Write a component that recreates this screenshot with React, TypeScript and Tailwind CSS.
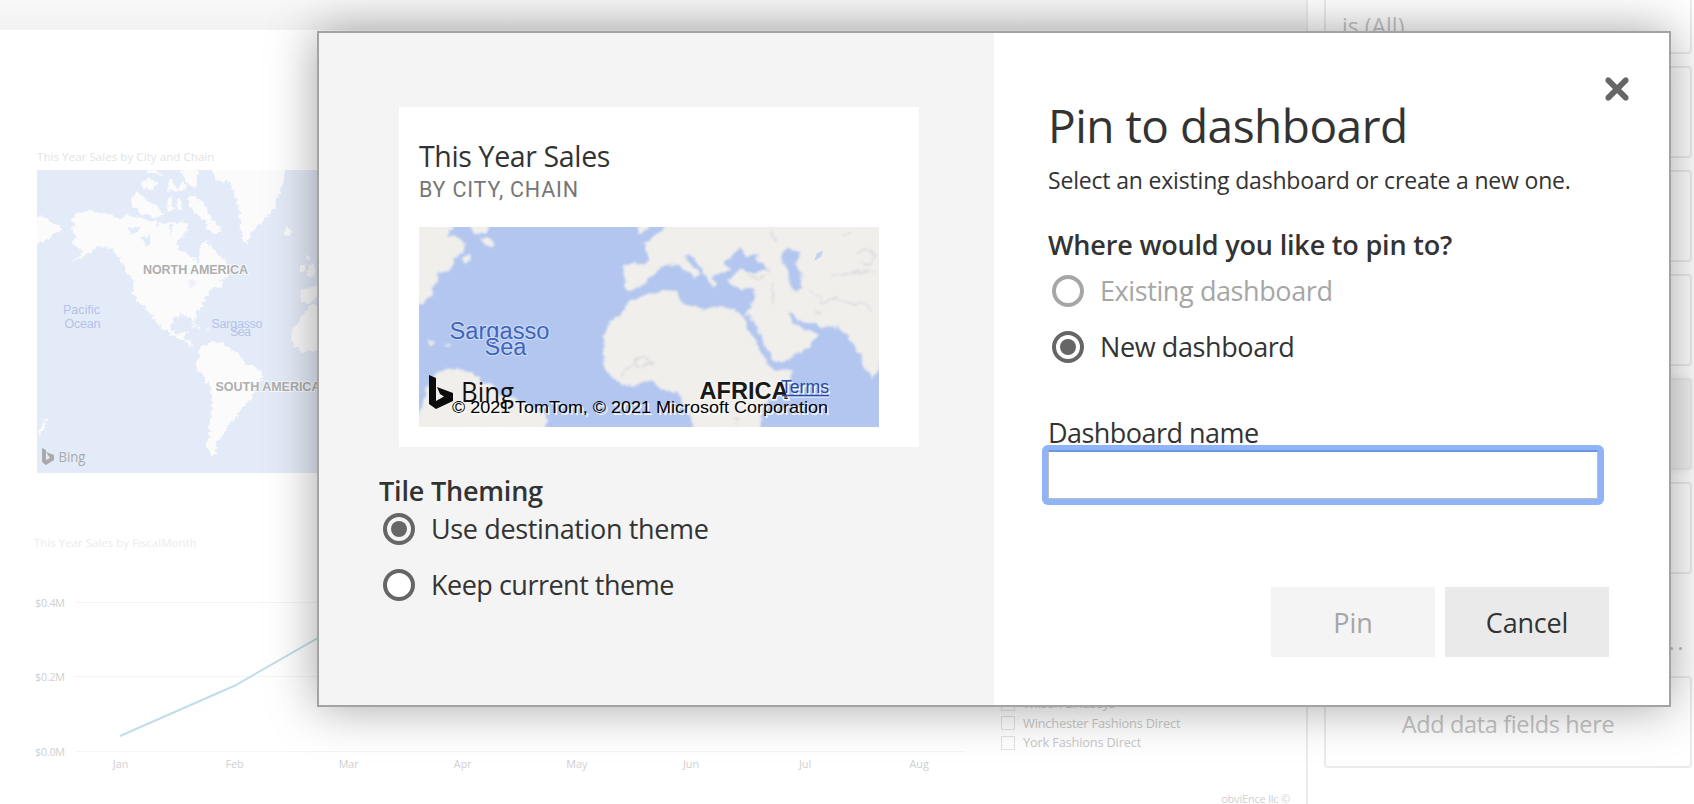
import { useId } from "react";

const T = "font-['Open_Sans','Noto_Sans',sans-serif] whitespace-nowrap";

function Rough({ id, f, s, b }: { id: string; f: number; s: number; b: number }) {
  return (
    <filter id={id} x="-5%" y="-5%" width="110%" height="110%">
      <feTurbulence type="fractalNoise" baseFrequency={f} numOctaves={3} seed={4} result="n" />
      <feDisplacementMap in="SourceGraphic" in2="n" scale={s} xChannelSelector="R" yChannelSelector="G" />
      <feGaussianBlur stdDeviation={b} />
    </filter>
  );
}

function WorldMap() {
  return (
    <svg width="284" height="303" viewBox="37 170 284 303" className="block">
      <defs><Rough id="rw" f={0.2} s={7} b={0.6} /></defs>
      <rect x="37" y="170" width="284" height="304" fill="#e4ebf8" />
      <g fill="#fbfbfb" filter="url(#rw)">
        <path d="M30 214L45 217L52 223L60 226L64 231L54 232L51 238L46 241L30 246Z" />
        <path d="M76 214L84 211L99 212L110 214L119 220L126 215L135 216L142 218L151 221L163 224L168 222L182 222L187 224L188 229L183 236L177 241L178 250L187 254L194 259L199 263L200 253L199 246L204 241L211 246L217 254L225 259L231 270L225 278L217 281L224 282L220 286L212 289L207 296L204 301L203 307L197 311L194 319L195 325L190 317L180 314L174 318L170 325L174 333L181 334L187 330L184 339L191 341L192 347L198 349L190 346L180 339L168 333L160 326L151 315L144 306L136 300L133 292L134 282L129 274L123 265L119 257L114 251L105 247L96 248L91 252L80 258L72 262L83 252L72 243L76 236L71 229L78 226L72 220Z" />
        <path d="M132 197L138 192L144 198L156 205L164 215L157 218L143 214L132 205Z" />
        <path d="M140 182L150 179L158 184L150 190L143 188ZM156 172L163 174L158 176ZM166 190L170 178L177 189L183 181L187 189L176 191ZM179 169L200 171L196 179L197 190L187 183L183 175ZM147 170L161 169L156 173L148 173Z" />
        <path d="M167 200L171 196L174 208L168 213ZM176 200L179 196L183 208L177 212ZM187 195L198 198L207 208L211 219L220 228L218 235L207 229L206 221L196 214L189 206Z" />
        <path d="M211 166L216 181L230 182L235 196L239 210L240 225L242 240L247 243L253 232L260 223L270 214L276 206L277 198L283 186L285 165L212 165Z" />
        <path d="M283 231L289 228L293 232L289 237L284 236Z" />
        <path d="M306 254L311 258L308 262ZM308 265L313 264L316 273L311 279L307 275ZM300 266L305 265L305 271L300 271Z" />
        <path d="M321 282L313 288L302 289L300 301L308 303L318 297L324 300V282ZM321 302L310 306L301 318L293 329L290 338L295 348L305 352L324 349Z" />
        <path d="M199 347L207 344L215 342L223 344L232 350L240 355L247 364L260 370L262 376L257 384L251 399L241 409L235 419L230 423L225 433L219 440L215 447L217 453L212 456L207 446L209 432L211 413L213 396L209 384L200 373L196 365L200 357Z" />
        <path d="M44 421L46 417L47 423ZM38 432L43 423L46 425L39 436Z" />
        <path d="M192 325L198 326L200 329L194 327ZM205 329L210 330L207 331Z" />
      </g>
      <g fill="#e4ebf8" filter="url(#rw)">
        <path d="M186 281L193 278L197 285L191 288Z" opacity=".5" />
        <path d="M159 216L156 228L161 222ZM171 219L170 237L174 225ZM128 228L140 226L138 232L130 233ZM142 238L150 234L150 246L145 244Z" />
      </g>
      <g fontFamily="Liberation Sans, sans-serif">
        <g fontSize="12.6" fontWeight="700" fill="#aeaeae" stroke="#fff" strokeWidth="2" strokeOpacity=".7" paintOrder="stroke">
          <text x="143" y="274" textLength="105">NORTH AMERICA</text>
          <text x="215.500" y="391" textLength="105">SOUTH AMERICA</text>
        </g>
        <g fontSize="12.5" fill="#b5c3e8">
          <text x="63" y="314" textLength="37">Pacific</text>
          <text x="64.500" y="327.500" textLength="36">Ocean</text>
          <text x="211.500" y="328" textLength="51">Sargasso</text>
          <text x="230" y="336" textLength="21">Sea</text>
        </g>
      </g>
      <path d="M42 448L46 450V460L50 458L48 455L46 452L54 455V460L46 465L42 462Z" fill="#a9a9a9" />
      <text x="58.500" y="462" fontFamily="Open Sans, sans-serif" fontSize="14" fill="#a9a9a9" textLength="27" lengthAdjust="spacingAndGlyphs">Bing</text>
    </svg>
  );
}

function TileMap() {
  return (
    <svg width="460" height="200" viewBox="0 0 460 200" className="block">
      <defs><Rough id="rt" f={0.12} s={8} b={0.9} /></defs>
      <rect width="460" height="200" fill="#b2c6ef" />
      <g fill="#f1efec" stroke="#dfe4ee" strokeWidth="1" filter="url(#rt)">
        <path d="M-5 -5H36L30 8L46 16L42 26L36 31L31 43L20 46L14 60L12 70L2 76L-5 80Z" />
        <path d="M42 32L48 27L52 33L44 36ZM62 13L70 10L75 16L68 20ZM52 -2L70 -3L66 6L54 6Z" />
        <path d="M218 6L223 -2L230 -3L222 8Z" />
        <path d="M249 -5L238 8L225 16L228 26L229 36L205 37L205 58L213 64L222 60L231 50L239 43L247 37L257 37L267 43L275 50L283 46L270 37L264 29L271 27L281 38L288 49L293 60L297 57L291 47L305 47L310 42L306 35L314 26L322 22L328 29L341 26L338 35L350 42L336 46L321 42L308 53L314 60L323 62L333 62L336 70L331 82L326 87L335 93L341 106L348 119L355 135L363 135L382 126L394 115L400 107L392 103L384 102L375 96L368 86L374 87L383 95L397 99L407 99L419 100L431 111L440 127L448 144L453 151L459 142L466 130V-5ZM363 24L371 21L381 26L377 36L383 50L382 62L374 62L370 52L367 40L363 34Z" fillRule="evenodd" />
        <path d="M207 78L219 71L235 66L258 62L260 75L273 79L284 83L293 79L318 83L325 91L330 103L338 119L346 133L354 143L374 143L371 151L356 166L343 181L341 203H275L267 181L259 164L244 163L231 153L212 160L199 155L190 147L184 137L186 117L185 108L192 95L201 87Z" />
        <path d="M-5 203L9 161L18 145L34 142L52 144L61 153L76 159L81 168L94 172L111 181L127 188L130 194L126 203Z" />
        <path d="M9 113L16 115L12 118ZM25 118L31 117L29 121Z" />
      </g>
      <g fill="none" stroke="#d8d8da" strokeWidth="1.500" filter="url(#rt)">
        <path d="M202 150L212 137L219 130L225 129L232 135L226 140L218 139L217 133" />
        <path d="M328 47L337 52L348 48M390 63L405 76L416 70L428 77L440 75L453 83M413 47L430 48L445 44L458 46M439 25L449 23L456 29L450 36L440 35M424 8L432 7M316 190L320 200M397 84L403 87M354 57V76M350 -1L358 15" />
      </g>
      <path d="M395 34L398 26L404 24L402 30Z" fill="#c6d3ee" />
      <g fontFamily="Liberation Sans, sans-serif">
        <g fontSize="23.500" fill="#4066bd" stroke="#cbd8f4" strokeWidth="2.500" strokeLinejoin="round" paintOrder="stroke">
          <text x="30.500" y="112" textLength="100" lengthAdjust="spacingAndGlyphs">Sargasso</text>
          <text x="65.500" y="128" textLength="42" lengthAdjust="spacingAndGlyphs">Sea</text>
        </g>
        <text x="280.500" y="172" fontSize="23.500" fontWeight="700" fill="#191919" stroke="#f7f6f4" strokeWidth="3" paintOrder="stroke" textLength="89" lengthAdjust="spacingAndGlyphs">AFRICA</text>
      </g>
      <path d="M10 148L17 151V174L25 169.500L21 167L18 160L34 166V174L17 182L10 177Z" fill="#0c0c0c" />
      <text x="42" y="175" fontFamily="Open Sans, sans-serif" fontSize="27" fill="#111" textLength="53" lengthAdjust="spacingAndGlyphs">Bing</text>
      <g fontFamily="Liberation Sans, sans-serif" fontSize="17" className="[text-shadow:1.500px_1.500px_0_rgba(255,255,255,0.9)]">
        <text x="33" y="186" fill="#000" textLength="376" lengthAdjust="spacingAndGlyphs">© 2021 TomTom, © 2021 Microsoft Corporation</text>
        <text x="362" y="166" fontSize="17.500" fill="#2a4aa5" textLength="48" lengthAdjust="spacingAndGlyphs">Terms</text>
      </g>
      <path d="M363 170H410" stroke="#fff" strokeOpacity=".8" />
      <path d="M363 168.500H410" stroke="#2a4aa5" strokeWidth="1.500" />
    </svg>
  );
}

function LineChart() {
  const months = ["Jan", "Feb", "Mar", "Apr", "May", "Jun", "Jul", "Aug"];
  const ticks = [["$0.4M", 602.5], ["$0.2M", 676.5], ["$0.0M", 751.5]] as const;
  return (
    <svg width="970" height="190" viewBox="0 590 970 190" className="block" fontFamily="Open Sans, sans-serif" fontSize="10.800" fill="#d0d0d0">
      {ticks.map(([t, y]) => (
        <g key={t}>
          <path d={`M75 ${y}H965`} stroke="#f5f5f5" />
          <text x="35" y={y + 4.500} textLength="30">{t}</text>
        </g>
      ))}
      {months.map((m, i) => (
        <text key={m} x={120.500 + i * 114.100} y="767.500" textAnchor="middle">{m}</text>
      ))}
      <path d="M120 736L235 685.500L318 638L460 600" fill="none" stroke="#c1dfe9" strokeWidth="2" />
    </svg>
  );
}

function Radio({ label, checked, disabled, track, onPanel }: { label: string; checked?: boolean; disabled?: boolean; track: string; onPanel?: boolean }) {
  const id = useId();
  const c = disabled ? "#a6a6a6" : "#666666";
  return (
    <label htmlFor={id} className="flex h-8 items-center">
      <input id={id} type="radio" checked={!!checked} disabled={disabled} readOnly className="sr-only" />
      <svg width="32" height="32" viewBox="0 0 32 32" className="shrink-0">
        <circle cx="16" cy="16" r="14" fill={checked && onPanel ? "#f4f4f4" : "#fff"} stroke={c} strokeWidth="4" />
        {checked && <circle cx="16" cy="16" r="8" fill={c} />}
      </svg>
      <span className={`${T} ml-4 text-[27px] leading-8 ${track} ${disabled ? "text-[#a6a6a6]" : "text-[#333]"}`}>{label}</span>
    </label>
  );
}

const stores = ["Wilson Lindseys", "Winchester Fashions Direct", "York Fashions Direct"];
const filters = ["", "", "", "active", ""];

function Report() {
  return (
    <main className="flex h-[804px] w-[1306px] shrink-0 flex-col">
      <div className="h-[30px] shrink-0 bg-linear-to-b from-[#f8f8f8] to-[#f2f2f2]" />
      <div className="flex grow flex-col">
        <h2 className={`${T} mt-[118px] ml-[37px] h-[22px] text-[11.5px] leading-[18px] tracking-[0.07px] text-[#e3e3e3]`}>This Year Sales by City and Chain</h2>
        <div className="ml-[37px]"><WorldMap /></div>
        <h2 className={`${T} mt-[61px] ml-[34px] text-[11.5px] leading-[18px] text-[#ebebeb]`}>This Year Sales by FiscalMonth</h2>
        <div className="mt-[38px] flex">
          <LineChart />
          <div className="flex grow flex-col pt-[104px] pl-[31px]">
            {stores.map((s) => (
              <div key={s} className="flex h-[19.5px] items-center gap-2">
                <span className="size-3.5 border border-[#e3e3e3]" />
                <span className={`${T} text-[12.8px] tracking-[-0.18px] text-[#c8c8c8]`}>{s}</span>
              </div>
            ))}
            <p className={`${T} mt-[38px] mr-4 text-right text-[11px] leading-4 tracking-[-0.2px] text-[#d0d0d0]`}>obviEnce llc ©</p>
          </div>
        </div>
      </div>
    </main>
  );
}

function FilterPane() {
  return (
    <aside className="flex h-[804px] w-[388px] shrink-0 flex-col gap-3 border-l-2 border-[#ebebeb] pr-0.5 pl-4">
      <div className="h-[54px] shrink-0 rounded-b border-2 border-t-0 border-[#ebebeb] pt-2 pl-4">
        <span className={`${T} text-[23px] leading-9 text-[#c6c6c6]`}>is (All)</span>
      </div>
      {filters.map((f, i) => (
        <div key={i} className={`h-[92px] shrink-0 rounded border-2 border-[#ebebeb] ${f ? "bg-[#f1f1f1] shadow-[0_0_8px_rgba(0,0,0,0.06)]" : ""}`} />
      ))}
      <div className="flex h-[78px] shrink-0 items-center justify-end gap-[6px] pt-[46px] pr-[10px]">
        {[0, 1, 2].map((d) => <span key={d} className="size-[3px] rounded-full bg-[#bdbdbd]" />)}
      </div>
      <div className="flex h-[92px] shrink-0 justify-center rounded border-2 border-[#ebebeb] pt-[28px]">
        <span className={`${T} text-[23.5px] leading-9 tracking-[-0.36px] text-[#c4c4c4]`}>Add data fields here</span>
      </div>
    </aside>
  );
}

function PinDialog() {
  return (
    <div role="dialog" className="absolute top-[31px] left-[317px] flex h-[676px] w-[1354px] border-2 border-[#a3a3a3] bg-white shadow-[0_0_46px_0_rgba(0,0,0,0.36)]">
      <section className="flex w-[675px] flex-col bg-[#f4f4f4] pt-[74px]">
        <div className="ml-20 h-[340px] w-[520px] bg-white px-5 pt-[31px]">
          <h3 className={`${T} text-[28.5px] leading-9 tracking-[-0.36px] text-[#333]`}>This Year Sales</h3>
          <p className="h-[53px] font-['Roboto',sans-serif] text-[21.5px] leading-8 tracking-[0.8px] whitespace-nowrap text-[#767676]">BY CITY, CHAIN</p>
          <TileMap />
        </div>
        <h3 className={`${T} mt-[24px] ml-[60px] h-[42px] text-[27px] leading-10 font-semibold tracking-[-0.2px] text-[#333]`}>Tile Theming</h3>
        <div className="ml-16 flex flex-col gap-6">
          <Radio label="Use destination theme" checked onPanel track="tracking-[-0.36px]" />
          <Radio label="Keep current theme" track="tracking-[-0.5px]" />
        </div>
      </section>
      <section className="flex w-[675px] flex-col pl-[54px]">
        <div className="flex h-[126px] pt-[44px]">
          <h1 className={`${T} mt-[18px] grow text-[46px] leading-[60px] tracking-[-0.5px] text-[#333]`}>Pin to dashboard</h1>
          <button className="mr-10 size-6" aria-label="Close">
            <svg width="24" height="24" viewBox="0 0 24 24"><path d="M2.500 2.500L21.500 21.500M21.500 2.500L2.500 21.500" stroke="#666" strokeWidth="5.800" strokeLinecap="butt" strokeLinejoin="round" /><path d="M3 3L21 21M21 3L3 21" stroke="#666" strokeWidth="5" strokeLinecap="round" /></svg>
          </button>
        </div>
        <p className={`${T} h-[62px] pt-[3px] text-[23px] leading-9 tracking-[-0.18px] text-[#333]`}>Select an existing dashboard or create a new one.</p>
        <h3 className={`${T} h-[54px] pt-1 text-[27px] leading-10 font-semibold tracking-[-0.18px] text-[#333]`}>Where would you like to pin to?</h3>
        <div className="ml-1 flex flex-col gap-6">
          <Radio label="Existing dashboard" disabled track="tracking-[-0.4px]" />
          <Radio label="New dashboard" checked track="tracking-[-0.4px]" />
        </div>
        <label className={`${T} mt-[50px] h-[32px] text-[27px] leading-10 tracking-[-0.54px] text-[#333]`}>Dashboard name</label>
        <div className="relative -ml-1.5 flex h-[60px] w-[562px] shrink-0 rounded-md bg-[#8fb4f8] p-1.5 pt-[5px]">
          <input aria-label="Dashboard name" className="w-full border border-t-2 border-[#bdbdbd] border-t-[#6b97e0] bg-white outline-none" />
        </div>
        <div className="mt-[82px] flex gap-2.5 pl-[223px]">
          <button disabled className={`${T} h-[70px] w-[164px] bg-[#f4f4f4] pt-0.5 text-[27px] text-[#a6a6a6]`}>Pin</button>
          <button className={`${T} h-[70px] w-[164px] bg-[#eaeaea] pt-0.5 text-[27px] tracking-[-0.2px] text-[#333]`}>Cancel</button>
        </div>
      </section>
    </div>
  );
}

export default function App() {
  return (
    <div className="relative flex h-[804px] w-[1694px] overflow-hidden bg-white">
      <Report />
      <FilterPane />
      <PinDialog />
    </div>
  );
}
